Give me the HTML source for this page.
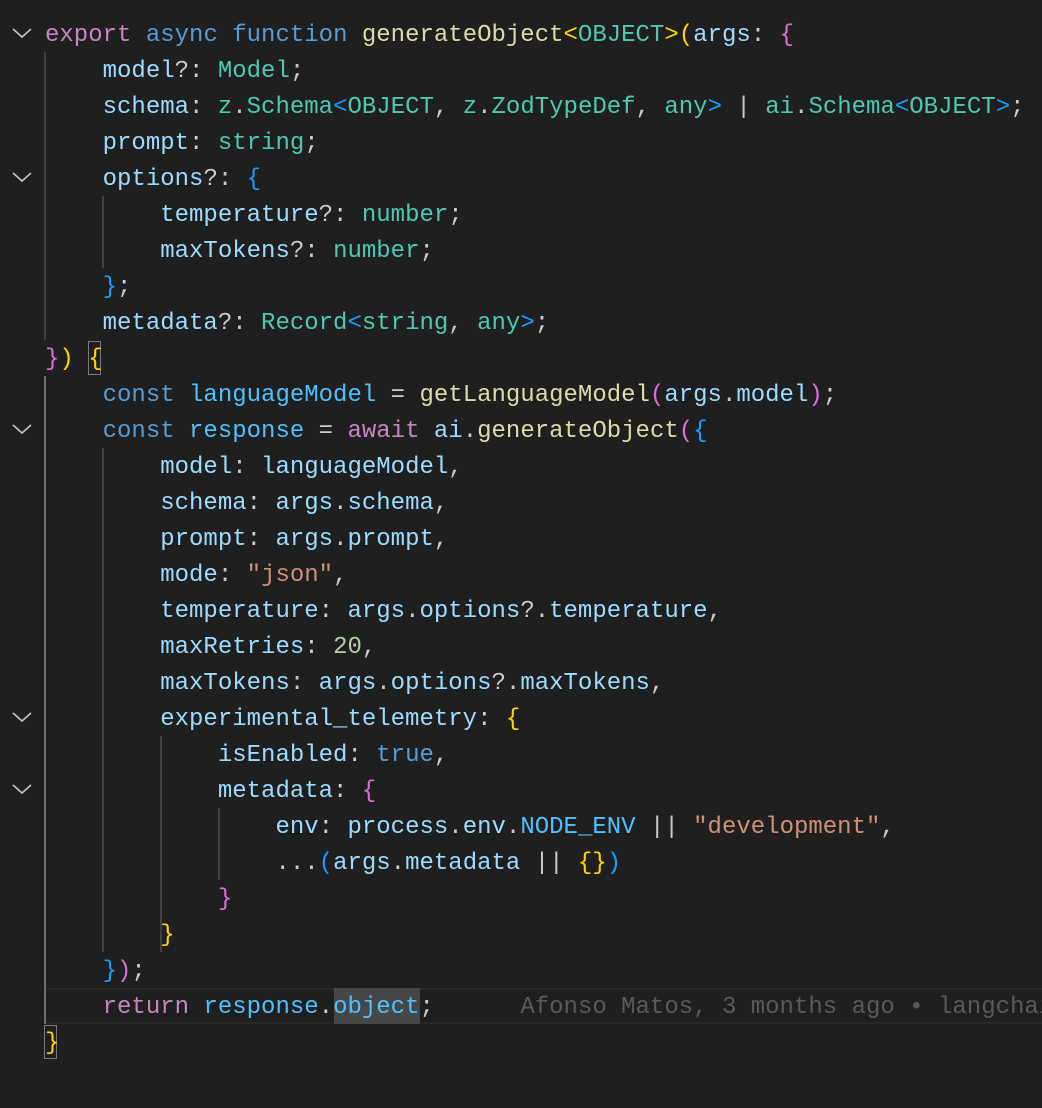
<!DOCTYPE html>
<html><head><meta charset="utf-8"><style>
html,body{margin:0;padding:0;background:#1f1f1f;width:1042px;height:1108px;overflow:hidden}
#c{position:absolute;left:45px;top:18px;margin:0;font-family:"Liberation Mono",monospace;font-size:24px;line-height:36px;color:#cccccc;white-space:pre;z-index:2}
.k{color:#c586c0}.b{color:#569cd6}.f{color:#dcdcaa}.p{color:#9cdcfe}.t{color:#4ec9b0}.s{color:#ce9178}.n{color:#b5cea8}.v{color:#4fc1ff}
.y{color:#ffd700}.m{color:#da70d6}.l{color:#179fff}
.g{position:absolute;width:2px;background:#404040;z-index:1}
.cur{position:absolute;left:46px;right:0;top:988px;height:32px;border-top:2px solid #282828;border-bottom:2px solid #282828}
.bx{position:absolute;border:1px solid #7a7a7a;width:13px;height:34px;box-sizing:border-box}
.hl{position:absolute;background:#474747;left:334px;top:988px;width:86px;height:36px}
.bl{color:#5a5a5a}
svg{position:absolute;left:12px}
</style></head><body>
<div class="cur"></div>
<div class="hl"></div>
<div class="bx" style="left:88px;top:341px"></div>
<div class="bx" style="left:44px;top:1025px"></div>
<div class="g" style="left:44px;top:52px;height:288px"></div>
<div class="g" style="left:44px;top:376px;height:648px;background:#6e6e6e"></div>
<div class="g" style="left:102px;top:196px;height:72px"></div>
<div class="g" style="left:102px;top:448px;height:504px"></div>
<div class="g" style="left:160px;top:736px;height:216px"></div>
<div class="g" style="left:218px;top:808px;height:72px"></div>
<svg style="top:28px" width="22" height="12"><polyline points="1,1 10,9 19,1" fill="none" stroke="#c5c5c5" stroke-width="1.6"/></svg>
<svg style="top:172px" width="22" height="12"><polyline points="1,1 10,9 19,1" fill="none" stroke="#c5c5c5" stroke-width="1.6"/></svg>
<svg style="top:424px" width="22" height="12"><polyline points="1,1 10,9 19,1" fill="none" stroke="#c5c5c5" stroke-width="1.6"/></svg>
<svg style="top:712px" width="22" height="12"><polyline points="1,1 10,9 19,1" fill="none" stroke="#c5c5c5" stroke-width="1.6"/></svg>
<svg style="top:784px" width="22" height="12"><polyline points="1,1 10,9 19,1" fill="none" stroke="#c5c5c5" stroke-width="1.6"/></svg>
<pre id="c"><span class="k">export</span> <span class="b">async</span> <span class="b">function</span> <span class="f">generateObject</span><span class="y">&lt;</span><span class="t">OBJECT</span><span class="y">&gt;(</span><span class="p">args</span>: <span class="m">{</span>
    <span class="p">model</span>?: <span class="t">Model</span>;
    <span class="p">schema</span>: <span class="t">z</span>.<span class="t">Schema</span><span class="l">&lt;</span><span class="t">OBJECT</span>, <span class="t">z</span>.<span class="t">ZodTypeDef</span>, <span class="t">any</span><span class="l">&gt;</span> | <span class="t">ai</span>.<span class="t">Schema</span><span class="l">&lt;</span><span class="t">OBJECT</span><span class="l">&gt;</span>;
    <span class="p">prompt</span>: <span class="t">string</span>;
    <span class="p">options</span>?: <span class="l">{</span>
        <span class="p">temperature</span>?: <span class="t">number</span>;
        <span class="p">maxTokens</span>?: <span class="t">number</span>;
    <span class="l">}</span>;
    <span class="p">metadata</span>?: <span class="t">Record</span><span class="l">&lt;</span><span class="t">string</span>, <span class="t">any</span><span class="l">&gt;</span>;
<span class="m">}</span><span class="y">)</span> <span class="y">{</span>
    <span class="b">const</span> <span class="v">languageModel</span> = <span class="f">getLanguageModel</span><span class="m">(</span><span class="p">args</span>.<span class="p">model</span><span class="m">)</span>;
    <span class="b">const</span> <span class="v">response</span> = <span class="k">await</span> <span class="p">ai</span>.<span class="f">generateObject</span><span class="m">(</span><span class="l">{</span>
        <span class="p">model</span>: <span class="p">languageModel</span>,
        <span class="p">schema</span>: <span class="p">args</span>.<span class="p">schema</span>,
        <span class="p">prompt</span>: <span class="p">args</span>.<span class="p">prompt</span>,
        <span class="p">mode</span>: <span class="s">"json"</span>,
        <span class="p">temperature</span>: <span class="p">args</span>.<span class="p">options</span>?.<span class="p">temperature</span>,
        <span class="p">maxRetries</span>: <span class="n">20</span>,
        <span class="p">maxTokens</span>: <span class="p">args</span>.<span class="p">options</span>?.<span class="p">maxTokens</span>,
        <span class="p">experimental_telemetry</span>: <span class="y">{</span>
            <span class="p">isEnabled</span>: <span class="b">true</span>,
            <span class="p">metadata</span>: <span class="m">{</span>
                <span class="p">env</span>: <span class="p">process</span>.<span class="p">env</span>.<span class="v">NODE_ENV</span> || <span class="s">"development"</span>,
                ...<span class="l">(</span><span class="p">args</span>.<span class="p">metadata</span> || <span class="y">{}</span><span class="l">)</span>
            <span class="m">}</span>
        <span class="y">}</span>
    <span class="l">}</span><span class="m">)</span>;
    <span class="k">return</span> <span class="v">response</span>.<span class="v">object</span>;      <span class="bl">Afonso Matos, 3 months ago • langchain</span>
<span class="y">}</span></pre>
</body></html>
